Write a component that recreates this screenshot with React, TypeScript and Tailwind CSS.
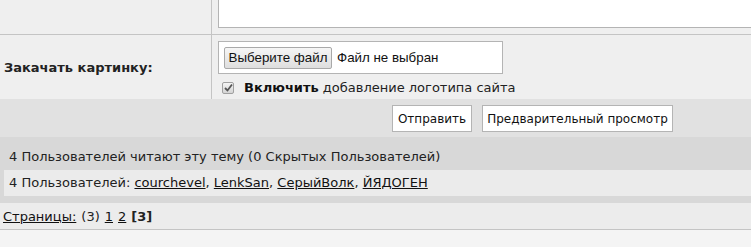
export default function App() {
  const users = ['courchevel', 'LenkSan', 'СерыйВолк', 'ЙЯДОГЕН'];

  return (
    <div className="w-[751px] h-[247px] overflow-hidden bg-[#f4f4f4] text-[13px] text-[#222] font-['DejaVu_Sans',Verdana,sans-serif]">
      {/* textarea row */}
      <div className="grid grid-cols-[212px_1fr] border-b border-[#c4c4c4] bg-[#efefef]">
        <div className="h-[34px] border-r border-[#c4c4c4]" />
        <div className="pl-[6px]">
          <div className="h-[28px] w-[560px] bg-white border-l border-b border-[#b4b4b4]" />
        </div>
      </div>

      {/* upload row */}
      <div className="grid grid-cols-[212px_1fr] bg-[#efefef]">
        <div className="h-[64px] flex items-center pl-[4px] border-r border-[#c4c4c4]">
          <span className="font-bold mt-[2px]">Закачать картинку:</span>
        </div>
        <div className="pl-[6px] pt-[6px]">
          <div className="w-[285px] h-[33px] bg-white border border-[#b4b4b4] flex items-center pl-[5px] font-['Liberation_Sans',Arial,sans-serif] text-[13.33px]">
            <button className="h-[22px] w-[108px] whitespace-nowrap border border-[#a9a9a9] rounded-[2px] bg-[linear-gradient(#f6f6f6,#dedede)] text-[#111]">
              Выберите файл
            </button>
            <span className="ml-[5px] text-[#111] whitespace-nowrap">Файл не выбран</span>
          </div>
          <div className="flex items-center mt-[4px] pl-[4px]">
            <span className="w-[12px] h-[12px] rounded-[2px] border border-[#a0a0a0] bg-[linear-gradient(#f4f4f4,#d4d4d4)] flex items-center justify-center">
              <svg width="9" height="9" viewBox="0 0 9 9">
                <path d="M1 5 L3.5 7.5 L8 1.5" fill="none" stroke="#555" strokeWidth="1.8" />
              </svg>
            </span>
            <span className="ml-[10px]">
              <b className="text-[#111]">Включить</b> добавление логотипа сайта
            </span>
          </div>
        </div>
      </div>

      {/* buttons row */}
      <div className="h-[38px] bg-[#e1e1e1] flex items-center pl-[392px] gap-[10px] pt-[1px] text-[12px]">
        <button className="h-[27px] w-[80px] whitespace-nowrap bg-white border border-[#b4b4b4] text-[#111]">Отправить</button>
        <button className="h-[27px] w-[191px] whitespace-nowrap bg-white border border-[#b4b4b4] text-[#111]">Предварительный просмотр</button>
      </div>

      {/* active users */}
      <div className="bg-[#d8d8d8] pl-[4px] pb-[7px]">
        <div className="h-[33px] flex items-center pl-[5px] pt-[6px]">
          4 Пользователей читают эту тему (0 Скрытых Пользователей)
        </div>
        <div className="h-[26px] bg-[#ebebeb] flex items-center pl-[5px]">
          <span>
            4 Пользователей:{' '}
            {users.map((u, i) => (
              <span key={u}>
                <a className="underline text-[#111]" href="#">{u}</a>
                {i < users.length - 1 ? ', ' : ''}
              </span>
            ))}
          </span>
        </div>
      </div>

      {/* pages */}
      <div className="h-[27px] bg-[#ececec] border-b border-[#c4c4c4] flex items-center pl-[3px] pt-[2px]">
        <a className="underline text-[#111]" href="#">Страницы:</a>
        <span className="ml-[5px]">(3)</span>
        <a className="underline ml-[5px] text-[#111]" href="#">1</a>
        <a className="underline ml-[5px] text-[#111]" href="#">2</a>
        <b className="ml-[5px]">[3]</b>
      </div>
    </div>
  );
}
